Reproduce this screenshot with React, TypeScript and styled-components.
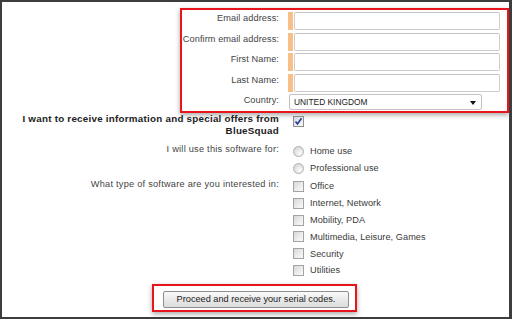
import styled, { createGlobalStyle } from 'styled-components';

const GlobalStyle = createGlobalStyle`
  html, body {
    margin: 0;
    padding: 0;
    background: #fff;
  }
  body {
    font-family: "Liberation Sans", Arial, sans-serif;
  }
`;

const Frame = styled.div`
  box-sizing: border-box;
  width: 512px;
  height: 319px;
  border-style: solid;
  border-color: #3d3d3d;
  border-width: 2px 3px 2px 2px;
  background: #fff;
  overflow: hidden;
  font-size: 9.2px;
  color: #444;
`;

const Highlight = styled.div`
  box-sizing: border-box;
  border: 2px solid #e8161c;
  box-shadow: 0 2px 5px rgba(0, 0, 0, 0.35);
`;

const AccountBox = styled(Highlight)`
  margin: 6px 0 0 178px;
  width: 329px;
  padding: 2px 7px 1px 0;
  display: grid;
  grid-template-columns: 97px 1fr;
  column-gap: 9px;
  row-gap: 2.5px;
`;

const FieldLabel = styled.div`
  display: flex;
  justify-content: flex-end;
  white-space: nowrap;
  line-height: 12px;
  letter-spacing: 0.08px;
`;

const InputWrap = styled.div`
  display: flex;
  height: 18px;
  gap: 1px;
`;

const Required = styled.span`
  width: 5px;
  background: #f8bf88;
`;

const TextInput = styled.input`
  flex: 1;
  box-sizing: border-box;
  height: 18px;
  border: 1px solid #cdcdcd;
  border-top-color: #c4c4c4;
  border-radius: 2px;
  background: #fff;
  padding: 0 3px;
  font: inherit;
  outline: none;
`;

const Select = styled.div`
  box-sizing: border-box;
  width: 193px;
  height: 16px;
  margin-left: 1px;
  border: 1px solid #c2c2c2;
  border-radius: 2px;
  display: flex;
  align-items: center;
  justify-content: space-between;
  padding: 0 5px 0 4px;
  font-size: 8.4px;
  color: #1a1a1a;
`;

const Arrow = styled.span`
  width: 0;
  height: 0;
  border-left: 3.5px solid transparent;
  border-right: 3.5px solid transparent;
  border-top: 4px solid #111;
  margin-top: 2px;
`;

const Options = styled.div`
  display: grid;
  grid-template-columns: 277px 1fr;
  column-gap: 14px;
`;

const Group = styled.div<{ $top: number }>`
  display: contents;
  & > * {
    margin-top: ${(p) => p.$top}px;
  }
`;

const Question = styled.div<{ $bold?: boolean }>`
  display: flex;
  flex-direction: column;
  align-items: flex-end;
  white-space: nowrap;
  line-height: 12px;
  font-size: ${(p) => (p.$bold ? 9.8 : 9.2)}px;
  letter-spacing: ${(p) => (p.$bold ? 0.25 : 0.25)}px;
  font-weight: ${(p) => (p.$bold ? 700 : 400)};
  color: ${(p) => (p.$bold ? '#222' : '#444')};
`;

const Choices = styled.div`
  display: flex;
  flex-direction: column;
`;

const Choice = styled.label`
  display: flex;
  align-items: center;
  gap: 6px;
  height: 16.8px;
  color: #3a3a3a;
  white-space: nowrap;
  letter-spacing: 0.05px;
`;

const Box = styled.span<{ $checked?: boolean }>`
  box-sizing: border-box;
  width: 11px;
  height: 11px;
  border: 1px solid ${(p) => (p.$checked ? '#8c8c8c' : '#a3a3a3')};
  background: linear-gradient(135deg, #d6d6d6 0%, #ececec 55%, #fafafa 100%);
  display: flex;
  align-items: center;
  justify-content: center;
`;

const Radio = styled.span`
  box-sizing: border-box;
  width: 11px;
  height: 11px;
  border-radius: 50%;
  border: 1px solid #b0b0b0;
  background: radial-gradient(circle at 65% 70%, #fdfdfd 0%, #e6e6e6 45%, #cfcfcf 100%);
`;

const CheckedBox = styled(Box)`
  margin-top: 3px;
`;

const SubmitBox = styled(Highlight)`
  margin: 5px 0 0 150px;
  width: 205px;
  padding: 5px 6px 2px 9px;
`;

const Button = styled.button`
  box-sizing: border-box;
  width: 186px;
  height: 17px;
  padding: 0;
  border: 1px solid #8e8e8e;
  border-radius: 2px;
  background: linear-gradient(#fbfbfb, #e9e9e9 50%, #dcdcdc);
  font-family: inherit;
  font-size: 9.2px;
  color: #222;
  cursor: pointer;
`;

const Tick = () => (
  <svg width="9" height="9" viewBox="0 0 9 9">
    <path d="M1.5 4.5 L3.5 7 L7.5 1.2" fill="none" stroke="#23399a" strokeWidth="1.6" />
  </svg>
);

const fields = ['Email address:', 'Confirm email address:', 'First Name:', 'Last Name:'];
const uses = ['Home use', 'Professional use'];
const kinds = ['Office', 'Internet, Network', 'Mobility, PDA', 'Multimedia, Leisure, Games', 'Security', 'Utilities'];

export default function App() {
  return (
    <>
      <GlobalStyle />
      <Frame>
        <AccountBox>
          {fields.map((f) => (
            <>
              <FieldLabel key={f + 'l'}>{f}</FieldLabel>
              <InputWrap key={f + 'i'}>
                <Required />
                <TextInput type="text" />
              </InputWrap>
            </>
          ))}
          <FieldLabel>Country:</FieldLabel>
          <Select>
            UNITED KINGDOM
            <Arrow />
          </Select>
        </AccountBox>

        <Options>
          <Group $top={0}>
            <Question $bold>
              <span>I want to receive information and special offers from</span>
              <span>BlueSquad</span>
            </Question>
            <div>
              <CheckedBox $checked>
                <Tick />
              </CheckedBox>
            </div>
          </Group>
          <Group $top={6}>
            <Question>I will use this software for:</Question>
            <Choices>
              {uses.map((u) => (
                <Choice key={u}>
                  <Radio />
                  {u}
                </Choice>
              ))}
            </Choices>
          </Group>
          <Group $top={1.5}>
            <Question>What type of software are you interested in:</Question>
            <Choices>
              {kinds.map((k) => (
                <Choice key={k}>
                  <Box />
                  {k}
                </Choice>
              ))}
            </Choices>
          </Group>
        </Options>

        <SubmitBox>
          <Button>Proceed and receive your serial codes.</Button>
        </SubmitBox>
      </Frame>
    </>
  );
}
